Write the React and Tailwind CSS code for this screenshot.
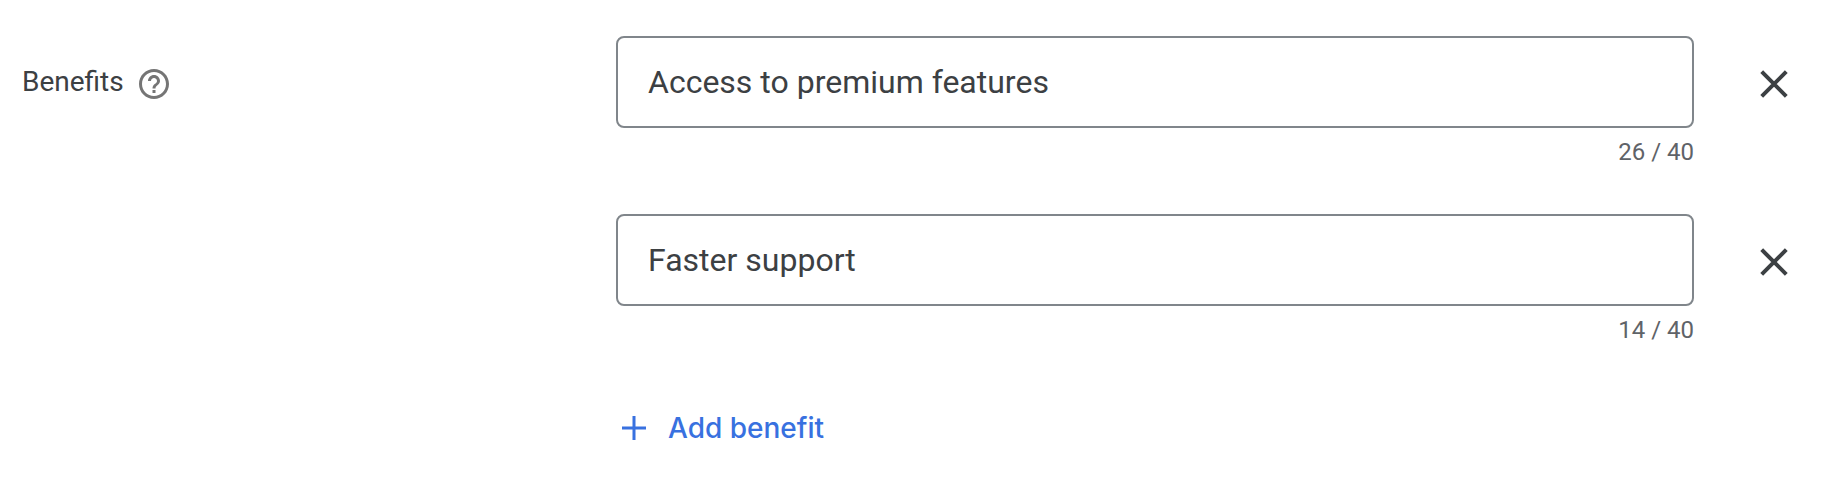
import React, { useState } from "react";

const MAX_LENGTH = 40;

function HelpIcon() {
  return (
    <svg viewBox="0 0 24 24" className="size-9" fill="currentColor" aria-hidden="true">
      <path d="M11 18h2v-2h-2v2zm1-16C6.48 2 2 6.48 2 12s4.48 10 10 10 10-4.48 10-10S17.52 2 12 2zm0 18c-4.41 0-8-3.59-8-8s3.59-8 8-8 8 3.59 8 8-3.59 8-8 8zm0-14c-2.21 0-4 1.79-4 4h2c0-1.1.9-2 2-2s2 .9 2 2c0 2-3 1.75-3 5h2c0-2.25 3-2.5 3-5 0-2.21-1.79-4-4-4z" />
    </svg>
  );
}

function CloseIcon() {
  return (
    <svg viewBox="0 0 28 28" className="size-7" stroke="currentColor" strokeWidth="4" aria-hidden="true">
      <path d="M1.7 1.7l24.6 24.6M26.3 1.7L1.7 26.3" />
    </svg>
  );
}

function PlusIcon() {
  return (
    <svg viewBox="0 0 24 24" className="size-6" stroke="currentColor" strokeWidth="3" aria-hidden="true">
      <path d="M12 0v24M0 12h24" />
    </svg>
  );
}

function BenefitRow({ id, value, onChange, onRemove }) {
  return (
    <div className="flex items-start gap-8">
      <div className="min-w-0 flex-1">
        <input
          id={id}
          type="text"
          aria-label="Benefit"
          maxLength={MAX_LENGTH}
          value={value}
          onChange={(e) => onChange(e.target.value)}
          className="block h-23 w-full rounded-lg border-2 border-[#80868b] bg-white px-[30px] text-[32px] text-[#3c4043] outline-none focus:border-[#1a73e8]"
        />
        <p className="pt-2 text-right text-[24px] leading-8 text-[#5f6368]">
          {value.length} / {MAX_LENGTH}
        </p>
      </div>

      <button
        type="button"
        aria-label="Remove benefit"
        onClick={onRemove}
        className="flex size-24 items-center justify-center rounded-full text-[#3c4043]"
      >
        <CloseIcon />
      </button>
    </div>
  );
}

export default function App() {
  const [benefits, setBenefits] = useState([
    { id: 1, text: "Access to premium features" },
    { id: 2, text: "Faster support" },
  ]);

  const updateBenefit = (id, text) => {
    setBenefits(benefits.map((b) => (b.id === id ? { ...b, text } : b)));
  };

  const removeBenefit = (id) => {
    setBenefits(benefits.filter((b) => b.id !== id));
  };

  const addBenefit = () => {
    setBenefits([...benefits, { id: Date.now(), text: "" }]);
  };

  return (
    <div className="grid min-h-screen grid-cols-[594px_1fr] bg-white pt-9 pr-0.5 pl-[22px] font-['Roboto',sans-serif]">
      <div className="flex h-24 items-center gap-3 text-[#3c4043]">
        <label htmlFor="benefit-1" className="pb-1 text-[28px] leading-9">
          Benefits
        </label>
        <button type="button" aria-label="Help" className="text-[#757575]">
          <HelpIcon />
        </button>
      </div>

      <div>
        <div className="flex flex-col gap-[46px]">
          {benefits.map((b) => (
            <BenefitRow
              key={b.id}
              id={`benefit-${b.id}`}
              value={b.text}
              onChange={(text) => updateBenefit(b.id, text)}
              onRemove={() => removeBenefit(b.id)}
            />
          ))}
        </div>

        <button
          type="button"
          onClick={addBenefit}
          className="mt-14 flex h-[52px] items-center gap-[22px] px-1.5 font-['Inter',sans-serif] text-[28px] font-medium text-[#3871e0]"
        >
          <PlusIcon />
          Add benefit
        </button>
      </div>
    </div>
  );
}
